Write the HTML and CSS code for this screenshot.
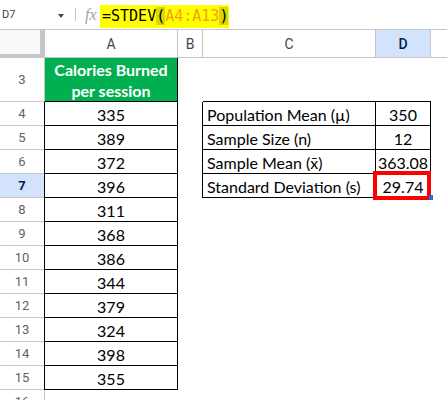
FILE: index.html
```html
<!DOCTYPE html>
<html>
<head>
<meta charset="utf-8">
<link rel="stylesheet" href="styles.css">
</head>
<body>
<div class="app">
  <div class="fbar">
    <span class="namebox">D7</span>
    <span class="caret"></span>
    <span class="sep"></span>
    <span class="fx">fx</span>
    <span class="formula">=STDEV<span class="paren">(</span><span class="ref">A4:A13</span><span class="paren">)</span></span>
  </div>
  <div class="sheet">
    <div class="corner"></div><div class="ch ch-a">A</div><div class="ch">B</div><div class="ch">C</div><div class="ch sel">D</div><div class="ch last"></div>

    <div class="rh">3</div><div class="hdr">Calories Burned<br>per session</div><div class="c"></div><div class="c top"></div><div class="c top"></div><div class="c"></div>

    <div class="rh">4</div><div class="a">335</div><div class="c edge"></div><div class="lbl">Population Mean (µ)</div><div class="num">350</div><div class="c"></div>
    <div class="rh">5</div><div class="a">389</div><div class="c edge"></div><div class="lbl">Sample Size (n)</div><div class="num">12</div><div class="c"></div>
    <div class="rh">6</div><div class="a">372</div><div class="c edge"></div><div class="lbl">Sample Mean (x̄)</div><div class="num">363.08</div><div class="c"></div>
    <div class="rh rsel">7</div><div class="a">396</div><div class="c edge"></div><div class="lbl">Standard Deviation (s)</div><div class="num active">29.74</div><div class="c"></div>
    <div class="rh">8</div><div class="a">311</div><div class="c"></div><div class="c"></div><div class="c"></div><div class="c"></div>
    <div class="rh">9</div><div class="a">368</div><div class="c"></div><div class="c"></div><div class="c"></div><div class="c"></div>
    <div class="rh">10</div><div class="a">386</div><div class="c"></div><div class="c"></div><div class="c"></div><div class="c"></div>
    <div class="rh">11</div><div class="a">344</div><div class="c"></div><div class="c"></div><div class="c"></div><div class="c"></div>
    <div class="rh">12</div><div class="a">379</div><div class="c"></div><div class="c"></div><div class="c"></div><div class="c"></div>
    <div class="rh">13</div><div class="a">324</div><div class="c"></div><div class="c"></div><div class="c"></div><div class="c"></div>
    <div class="rh">14</div><div class="a">398</div><div class="c"></div><div class="c"></div><div class="c"></div><div class="c"></div>
    <div class="rh">15</div><div class="a">355</div><div class="c"></div><div class="c"></div><div class="c"></div><div class="c"></div>
    <div class="rh">16</div><div class="c a16"></div><div class="c"></div><div class="c"></div><div class="c"></div><div class="c"></div>
  </div>
</div>
</body>
</html>
```

FILE: styles.css
```css
* { box-sizing: border-box; }
html, body { margin: 0; padding: 0; background: #fff; }
body { width: 447px; height: 400px; overflow: hidden; font-family: "Lato", "Liberation Sans", sans-serif; }

.fbar {
  height: 30px;
  border-bottom: 1px solid #c4c7c5;
  display: flex;
  align-items: center;
  background: #fff;
}
.namebox {
  font-family: Roboto, "Liberation Sans", sans-serif;
  font-size: 11px;
  color: #3c4043;
  margin-left: 2px;
  width: 56px;
}
.caret {
  width: 0; height: 0;
  border-left: 3.5px solid transparent;
  border-right: 3.5px solid transparent;
  border-top: 4px solid #444746;
  margin-top: 2px;
}
.sep {
  width: 1px;
  height: 13px;
  background: #c4c7c5;
  margin-left: 11px;
}
.fx {
  font-family: "Liberation Serif", serif;
  font-style: italic;
  font-size: 16px;
  color: #a0a4a8;
  margin-left: 9px;
  width: 15px;
}
.formula {
  display: inline-block;
  height: 23px;
  line-height: 23px;
  background: #ffff00;
  font-family: "DejaVu Sans Mono", "Liberation Mono", monospace;
  font-size: 15px;
  color: #000;
  padding: 0 1px 0 2px;
  margin-top: 4px;
}
.paren { background: #d9d600; }
.ref { color: #f5a00f; }

.sheet {
  display: grid;
  grid-template-columns: 44px 134px 25px 173px 55px 1fr;
  grid-template-rows: 28px 44px repeat(13, 24px);
}
.corner {
  background: #f8f9fa;
  border-right: 4px solid #c4c7c5;
  border-bottom: 4px solid #c4c7c5;
}
.ch {
  border-right: 1px solid #c4c7c5;
  border-bottom: 1px solid #c4c7c5;
  display: flex;
  align-items: center;
  justify-content: center;
  font-family: Roboto, "Liberation Sans", sans-serif;
  font-size: 14px;
  color: #444746;
}
.ch-a { border-left: 1px solid #c4c7c5; }
.ch.last { border-right: none; }
.ch.sel { background: #d3e3fd; color: #041e49; font-weight: 500; }

.rh {
  border-bottom: 1px solid #c4c7c5;
  display: flex;
  align-items: center;
  justify-content: center;
  font-family: Roboto, "Liberation Sans", sans-serif;
  font-size: 13px;
  color: #5f6368;
}
.rh.rsel { background: #d3e3fd; color: #041e49; font-weight: 700; }

.hdr {
  background: #00b050;
  color: #fff;
  font-weight: 700;
  font-size: 16px;
  line-height: 21px;
  text-align: center;
  border-left: 1px solid #c4c7c5;
  border-right: 1px solid #000;
  border-bottom: 1px solid #000;
  display: flex;
  align-items: center;
  justify-content: center;
}
.a {
  border-left: 1px solid #000;
  border-right: 1px solid #000;
  border-bottom: 1px solid #000;
  display: flex;
  align-items: flex-end;
  justify-content: center;
  font-size: 16px;
  line-height: 20px;
  color: #000;
}
.a16 { border-left: 1px solid #c4c7c5; }
.edge { border-right: 1px solid #000; }
.top { border-bottom: 1px solid #000; }
.lbl, .num {
  border-right: 1px solid #000;
  border-bottom: 1px solid #000;
  display: flex;
  align-items: flex-end;
  font-size: 16px;
  line-height: 20px;
  color: #000;
  white-space: nowrap;
}
.lbl { padding-left: 4px; }
.num { justify-content: center; }
.num.active { position: relative; }
.num.active::before {
  content: "";
  position: absolute;
  left: -3px; top: -3px; right: -1px; bottom: -3px;
  border: 4px solid #ff0000;
}
.num.active::after {
  content: "";
  position: absolute;
  width: 4px; height: 5px;
  right: -3px; bottom: -3px;
  background: #1a73e8;
}
```
